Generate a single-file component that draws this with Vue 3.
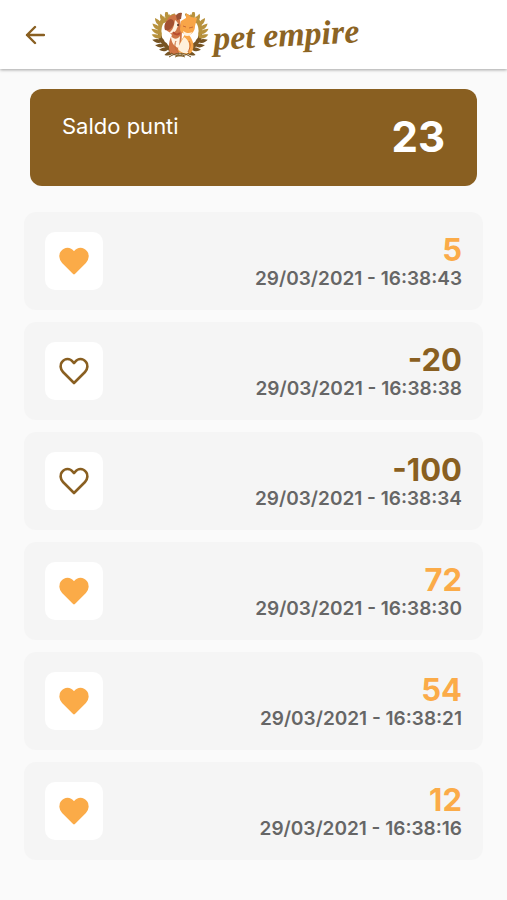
<script setup>
import { ref } from "vue";

const balance = ref(23);
const movements = ref([
  { id: 1, points: 5, date: "29/03/2021 - 16:38:43" },
  { id: 2, points: -20, date: "29/03/2021 - 16:38:38" },
  { id: 3, points: -100, date: "29/03/2021 - 16:38:34" },
  { id: 4, points: 72, date: "29/03/2021 - 16:38:30" },
  { id: 5, points: 54, date: "29/03/2021 - 16:38:21" },
  { id: 6, points: 12, date: "29/03/2021 - 16:38:16" },
]);

// laurel leaves, from the bottom of the branch to the top
const leaves = [
  { x: 23, y: 40, r: 20, dark: true },
  { x: 18, y: 37, r: 32, dark: true },
  { x: 14, y: 34, r: 42, dark: true },
  { x: 11, y: 30, r: 50, dark: true },
  { x: 10, y: 26, r: 58, dark: false },
  { x: 9, y: 22, r: 68, dark: false },
  { x: 9, y: 18, r: 78, dark: false },
  { x: 10, y: 14, r: 90, dark: false },
  { x: 13, y: 11, r: 106, dark: false },
  { x: 16, y: 8, r: 124, dark: false },
];
</script>

<template>
  <div class="page">
    <header>
      <button class="back" type="button" aria-label="Indietro">
        <svg width="20" height="20" viewBox="0 0 20 20">
          <path d="M10 2L2 10l8 8M2 10h17" />
        </svg>
      </button>
      <div class="brand">
        <svg class="emblem" width="58" height="46" viewBox="0 0 58 46">
          <g
            v-for="side in ['', 'translate(58 0) scale(-1 1)']"
            :key="side"
            :transform="side"
          >
            <path
              d="M17 5C4 13 6 34 23 41l11 4"
              fill="none"
              stroke="#8c6829"
              stroke-width="1"
            />
            <g
              v-for="leaf in leaves"
              :key="leaf.y"
              :transform="`translate(${leaf.x} ${leaf.y}) rotate(${leaf.r})`"
              :fill="leaf.dark ? '#765423' : '#b8923d'"
            >
              <path d="M0 0C-3-4-7-5-10-3-7 0-3 2 0 0Z" />
              <path d="M0 0C-1 4-4 6-8 6-6 2-4-1 0 0Z" />
            </g>
          </g>
          <!-- dog -->
          <path
            d="M28 3C23 1 17 4 15 10c-2 4-1 8 3 10l3 3c-3 5-4 12-2 18 4 3 9 1 11-2l1-20Z"
            fill="#cf7445"
          />
          <path d="M25 4c1-3 4-4 6-3l-1 6-4 1Z" fill="#995034" />
          <path
            d="M20 7c-5 1-8 6-6 11 4 1 6-1 8-4 2-3 1-6-2-7Z"
            fill="#a25032"
          />
          <path
            d="M24 8c3 2 4 5 2 8-1 4-4 6-8 5 4-3 5-7 6-13Z"
            fill="#fff1df"
          />
          <circle cx="27" cy="13" r="1" fill="#4e2c20" />
          <path d="M20 24c3 4 7 3 9 0l-1 12c-5-1-8-6-8-12Z" fill="#fff1df" />
          <path d="M22 20c2 3 5 3 7 1" fill="none" stroke="#b84b2e" stroke-width="2" />
          <!-- cat -->
          <path
            d="M29 17l1-8 5-3V1l5 4 6 1-2 8c0 5-3 8-6 9 5 6 6 13 2 18-5 3-11 0-13-2 1-8 5-13 7-17-3-1-5-2-5-5Z"
            fill="#f8a548"
          />
          <path d="M32 19c3 2 6 3 9 1-1 4-5 5-8 3Z" fill="#fff1df" />
          <path d="M33 25c5 3 7 9 4 16-4 1-8-1-10-4 1-5 4-8 6-12Z" fill="#fff0dc" />
          <path
            d="M32 14l3 1M38 16l4-1M25 29c-2 4-1 8 2 11M38 29c2 4 1 7-1 11"
            fill="none"
            stroke="#c96a35"
            stroke-width="1"
          />
          <path
            d="M18 45c8-5 14-5 22 0M20 41c7 4 12 4 18 0"
            fill="none"
            stroke="#765423"
            stroke-width="1"
          />
        </svg>
        <span class="name">pet empire</span>
      </div>
    </header>

    <main>
      <section class="balance">
        <span class="label">Saldo punti</span>
        <strong>{{ balance }}</strong>
      </section>

      <ul>
        <li v-for="item in movements" :key="item.id">
          <div class="icon">
            <svg
              :class="{ filled: item.points > 0 }"
              width="30"
              height="28"
              viewBox="0 0 30 28"
            >
              <path
                d="M15 26L4 15C1 12 1 7 3 5c3-4 8-4 11 0l1 1 1-1c3-4 8-4 11 0 2 2 2 7-1 10Z"
              />
            </svg>
          </div>
          <div class="info">
            <span class="points" :class="{ earned: item.points > 0 }">{{
              item.points
            }}</span>
            <span class="date">{{ item.date }}</span>
          </div>
        </li>
      </ul>
    </main>
  </div>
</template>

<style>
body {
  background: #fafafa;
}
</style>

<style scoped>
.page {
  font-family: Inter, "Liberation Sans", sans-serif;
  color: #895f21;
}

header {
  display: grid;
  grid-template-columns: 48px 1fr 44px;
  align-items: center;
  height: 69px;
  background: #fff;
  box-shadow: 0 1px 3px rgba(0, 0, 0, 0.35);
}

.back {
  display: flex;
  justify-content: flex-end;
  padding: 0 3px;
  border: none;
  background: none;
  cursor: pointer;
}

.back svg {
  fill: none;
  stroke: #895f21;
  stroke-width: 2.4;
  stroke-linecap: round;
  stroke-linejoin: round;
}

.brand {
  display: flex;
  justify-content: center;
  align-items: center;
  gap: 4px;
}

.name {
  font-family: "Liberation Serif", serif;
  font-size: 34px;
  line-height: 40px;
  font-style: italic;
  font-weight: bold;
  color: #8c6424;
  transform: rotate(-3deg);
}

main {
  padding: 20px 24px 40px;
}

.balance {
  display: flex;
  justify-content: space-between;
  align-items: flex-start;
  margin: 0 6px 26px;
  padding: 23px 32px 24px;
  height: 50px;
  border-radius: 12px;
  background: #895f21;
  color: #fff;
}

.label {
  font-size: 22px;
  line-height: 28px;
}

.balance strong {
  font-size: 42px;
  line-height: 50px;
  font-weight: 700;
}

ul {
  display: flex;
  flex-direction: column;
  gap: 12px;
  margin: 0;
  padding: 0;
  list-style: none;
}

li {
  display: flex;
  justify-content: space-between;
  align-items: center;
  padding: 20px 21px;
  border-radius: 12px;
  background: #f5f5f5;
}

.icon {
  display: flex;
  justify-content: center;
  align-items: center;
  width: 58px;
  height: 58px;
  border-radius: 10px;
  background: #fff;
}

.icon svg {
  fill: none;
  stroke: #895f21;
  stroke-width: 2.6;
  stroke-linejoin: round;
}

.icon .filled {
  fill: #fbab48;
  stroke: #fbab48;
}

.info {
  display: flex;
  flex-direction: column;
  align-items: flex-end;
}

.points {
  font-size: 31px;
  line-height: 36px;
  font-weight: 700;
}

.earned {
  color: #fbab48;
}

.date {
  font-size: 19px;
  line-height: 22px;
  font-weight: 600;
  color: #666;
}
</style>
